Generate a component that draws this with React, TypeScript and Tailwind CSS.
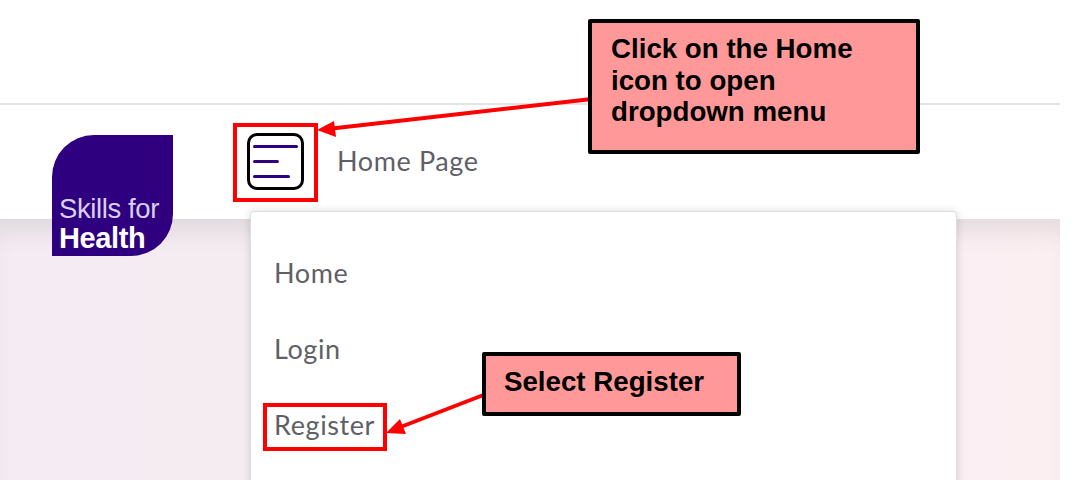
import React from 'react';

const menuItems = ['Home', 'Login', 'Register'];

const Callout = ({ className, children }: { className: string; children: React.ReactNode }) => (
  <div
    className={`absolute z-30 border-4 border-black rounded-[2px] bg-[#ff9999] font-['Liberation_Sans',Arial,sans-serif] font-bold text-black text-[27.7px] leading-[31.5px] ${className}`}
  >
    {children}
  </div>
);

const MenuIcon = () => (
  <div className="flex flex-col justify-between w-[57px] h-[57px] border-[3px] border-black rounded-[10px] pl-[3px] pt-[9px] pb-[9px]">
    <span className="block h-[3px] w-[45px] rounded-full bg-[#2e0080]" />
    <span className="block h-[3px] w-[26px] rounded-full bg-[#2e0080]" />
    <span className="block h-[3px] w-[37px] rounded-full bg-[#2e0080]" />
  </div>
);

export default function App() {
  return (
    <div className="relative w-[1078px] h-[485px] overflow-hidden bg-white font-['Lato','Noto_Sans',sans-serif] text-[#5f5f66]">
      <div className="w-[1060px] h-[480px] flex flex-col overflow-hidden">
        <div className="h-[105px] shrink-0 border-b-2 border-[#e3e5e5]" />

        <header className="relative z-10 h-[114px] shrink-0 flex items-start bg-white">
          <div className="ml-[52px] mt-[30px] w-[121px] h-[121px] shrink-0 flex flex-col justify-end pl-[7px] pb-[3px] bg-[#2e0080] rounded-tl-[42px] rounded-br-[42px] text-white font-['Liberation_Sans',Arial,sans-serif]">
            <span className="text-[27.5px] leading-[29px] font-light tracking-[-0.4px] text-[#d9cfee]">Skills for</span>
            <span className="text-[29px] leading-[30px] font-bold tracking-[-0.4px]">Health</span>
          </div>
          <div className="ml-[74px] mt-[28px]">
            <MenuIcon />
          </div>
          <span className="ml-[33px] mt-[39px] text-[27px] leading-[34px] tracking-[0.6px]">Home Page</span>
        </header>

        <main className="relative flex-1 bg-gradient-to-r from-[#f4ecf2] via-[#f6edf2] to-[#fbeff2] shadow-[inset_0_24px_24px_-12px_rgba(0,0,0,0.09)]">
          <nav className="absolute z-20 left-[250px] -top-[8px] w-[707px] h-[280px] bg-white border border-[#dedede] border-b-0 rounded-t-[4px] shadow-[0_0_8px_rgba(0,0,0,0.15)] flex flex-col pt-[44px] pl-[23px] gap-[42px]">
            {menuItems.map((item) => (
              <a key={item} className="block text-[27px] leading-[34px] tracking-[0.6px]">
                {item}
              </a>
            ))}
          </nav>
        </main>
      </div>

      {/* annotations on top of the screenshot */}
      <div className="absolute z-30 left-[233px] top-[123px] w-[85px] h-[79px] border-4 border-[#ff0000]" />
      <div className="absolute z-30 left-[263px] top-[403px] w-[124px] h-[48px] border-4 border-[#ff0000]" />

      <svg className="absolute z-30 left-0 top-0" width="1078" height="485" viewBox="0 0 1078 485">
        <line x1="592" y1="99" x2="332" y2="128.5" stroke="#ff0000" strokeWidth="4" />
        <polygon points="317,130 334,121 336,137" fill="#ff0000" />
        <line x1="486" y1="394" x2="398" y2="428" stroke="#ff0000" strokeWidth="4" />
        <polygon points="386,433 400,419 406,434" fill="#ff0000" />
      </svg>

      <Callout className="left-[588px] top-[19px] w-[332px] h-[135px] pl-[19px] pt-[10px]">
        Click on the Home
        <br />
        icon to open
        <br />
        dropdown menu
      </Callout>
      <Callout className="left-[482px] top-[352px] w-[259px] h-[64px] pl-[18px] pt-[10px]">Select Register</Callout>
    </div>
  );
}
